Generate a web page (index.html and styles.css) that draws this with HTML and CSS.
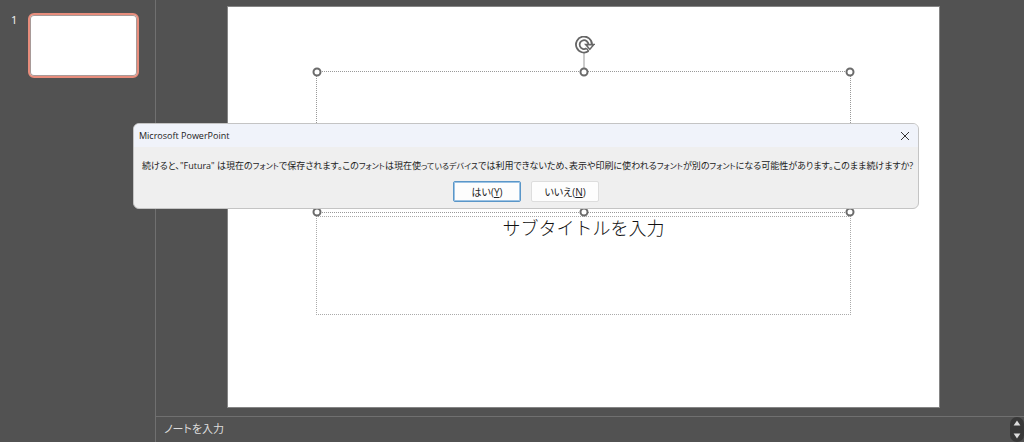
FILE: index.html
```html
<!DOCTYPE html>
<html lang="ja">
<head>
<meta charset="utf-8">
<meta name="viewport" content="width=device-width, initial-scale=1">
<title>Microsoft PowerPoint</title>
<link rel="stylesheet" href="styles.css">
</head>
<body>
<div class="app">
  <nav class="slides" aria-label="スライド">
    <span class="slide-number">1</span>
    <button class="thumbnail" type="button" aria-label="スライド 1"></button>
  </nav>
  <main class="editor">
    <div class="stage">
      <section class="slide">
        <div class="placeholder title-box">
          <svg class="rotate" viewBox="0 0 22 36" aria-hidden="true">
            <path d="M11 17V36" stroke="#999" fill="none"/>
            <path d="M19 8.6A8 8 0 1 0 15.6 15.1" stroke="#666" stroke-width="1.8" fill="none"/>
            <path d="M15.4 8.6A4.4 4.4 0 1 0 13.4 12.3" stroke="#666" stroke-width="1.8" fill="none"/>
            <path d="M15.6 15.1L13.4 12.3" stroke="#666" stroke-width="1.4" fill="none"/>
            <path d="M11 7.8H22.4L16.8 14.4Z" fill="#666"/>
            <path d="M14.6 9.6H19L16.8 12.2Z" fill="#fff"/>
          </svg>
          <i class="handle top start"></i>
          <i class="handle top middle"></i>
          <i class="handle top end"></i>
          <i class="handle bottom start"></i>
          <i class="handle bottom middle"></i>
          <i class="handle bottom end"></i>
        </div>
        <div class="placeholder subtitle-box">サブタイトルを入力</div>
      </section>
    </div>
    <div class="notes">
      <textarea class="notes-input" rows="1" placeholder="ノートを入力" aria-label="ノート"></textarea>
      <div class="scroller">
        <button type="button" aria-label="上へ"><svg viewBox="0 0 8 6"><path d="M4 0.4L7.4 5.6H0.6Z"/></svg></button>
        <button type="button" aria-label="下へ"><svg viewBox="0 0 8 6"><path d="M4 5.6L7.4 0.4H0.6Z"/></svg></button>
      </div>
    </div>
  </main>
</div>
<div class="dialog" role="alertdialog" aria-labelledby="dialog-title" aria-describedby="dialog-message">
  <header class="dialog-bar">
    <span id="dialog-title">Microsoft PowerPoint</span>
    <button class="close" type="button" aria-label="閉じる"><svg viewBox="0 0 10 10"><path d="M1 1L9 9M9 1L1 9"/></svg></button>
  </header>
  <p class="message" id="dialog-message">続けると、"Futura" は現在の<span class="kana">フォント</span>で保存されます。この<span class="kana">フォント</span>は現在使<span class="kana">っているデバイス</span>では利用できないため、表示や印刷に使われる<span class="kana">フォント</span>が別の<span class="kana">フォント</span>になる可能性があります。このまま続けますか?</p>
  <div class="actions">
    <button class="choice primary" type="button">はい(<u>Y</u>)</button>
    <button class="choice" type="button">いいえ(<u>N</u>)</button>
  </div>
</div>
</body>
</html>
```
FILE: styles.css
```css
* { box-sizing: border-box; }

body {
  margin: 0;
  background: #525252;
  color: #222;
  font-family: "Open Sans", "Noto Sans CJK JP", sans-serif;
  font-feature-settings: "palt";
}

button, textarea {
  margin: 0;
  padding: 0;
  border: 0;
  background: none;
  color: inherit;
  font: inherit;
  font-feature-settings: inherit;
}

.app {
  display: grid;
  grid-template-columns: 155px 1fr;
  min-height: 100vh;
}

.slides {
  display: flex;
  align-items: flex-start;
  gap: 11px;
  padding: 13px 16px 0 11px;
}

.slide-number {
  color: #eee;
  font: 11px/14px "Noto Sans", sans-serif;
}

.thumbnail {
  flex: 1;
  aspect-ratio: 111 / 65;
  border: 2px solid #e88d7c;
  border-radius: 6px;
  background: #fff;
  box-shadow: inset 0 0 0 1px #a89a98;
}

.editor {
  display: flex;
  flex-direction: column;
  border-left: 1px solid #707070;
}

.stage {
  flex: 1;
  padding: 7px 85px 8px 72px;
}

.slide {
  position: relative;
  aspect-ratio: 16 / 9;
  background: #fff;
  box-shadow: 0 0 0 1px #858585;
}

.placeholder {
  position: absolute;
  left: 12.5%;
  width: 75%;
}

.title-box {
  top: 16.3%;
  height: 35%;
  outline: 1px dotted #999;
}

.subtitle-box {
  top: 52.5%;
  height: 24.3%;
  outline: 1px dotted #aaa;
  color: #111;
  font: 300 18px/21px "Noto Sans CJK JP", sans-serif;
  font-feature-settings: normal;
  text-align: center;
}

.handle {
  position: absolute;
  z-index: 1;
  width: 9px;
  height: 9px;
  border: 2px solid #6b6b6b;
  border-radius: 50%;
  background: #fff;
  transform: translate(-50%, -50%);
}

.top { top: 0; }
.bottom { top: 100%; }
.start { left: 0; }
.middle { left: 50%; }
.end { left: 100%; }

.rotate {
  position: absolute;
  bottom: 100%;
  left: 50%;
  width: 22px;
  height: 36px;
  margin-left: -11px;
}

.notes {
  display: flex;
  justify-content: space-between;
  border-top: 1px solid #707070;
}

.notes-input {
  flex: 1;
  height: 24px;
  padding-left: 8px;
  resize: none;
  overflow: hidden;
  color: #ddd;
  font-size: 11px;
  line-height: 24px;
}

.notes-input::placeholder { color: #ddd; opacity: 1; }

.scroller {
  display: grid;
  width: 14px;
  height: 25px;
  border-radius: 7px;
  background: #383838;
}

.scroller button { display: grid; place-items: center; }
.scroller svg { width: 8px; height: 6px; fill: #ddd; }

.dialog {
  position: absolute;
  z-index: 2;
  top: 123px;
  left: 133px;
  right: 105px;
  overflow: hidden;
  border: 1px solid #c4c4c4;
  border-radius: 6px;
  background: #efefef;
  font-size: 9px;
}

.dialog-bar {
  display: flex;
  align-items: center;
  justify-content: space-between;
  height: 23px;
  padding: 0 8px 0 5px;
  background: #f0f3fa;
}

.close { display: grid; }
.close svg { width: 10px; height: 10px; fill: none; stroke: #333; }

.message {
  margin: 11px 2px 8px 8px;
  line-height: 15px;
}

.kana { font-size: 8px; }

.actions {
  display: flex;
  justify-content: center;
  gap: 10px;
  padding-bottom: 6px;
}

.choice {
  width: 68px;
  height: 21px;
  border: 1px solid #ddd;
  border-radius: 2px;
  background: #fdfdfd;
  font-size: 10px;
}

.primary {
  border-color: #5a96c8;
  box-shadow: inset 0 0 0 1px #9cc3e4;
}
```
